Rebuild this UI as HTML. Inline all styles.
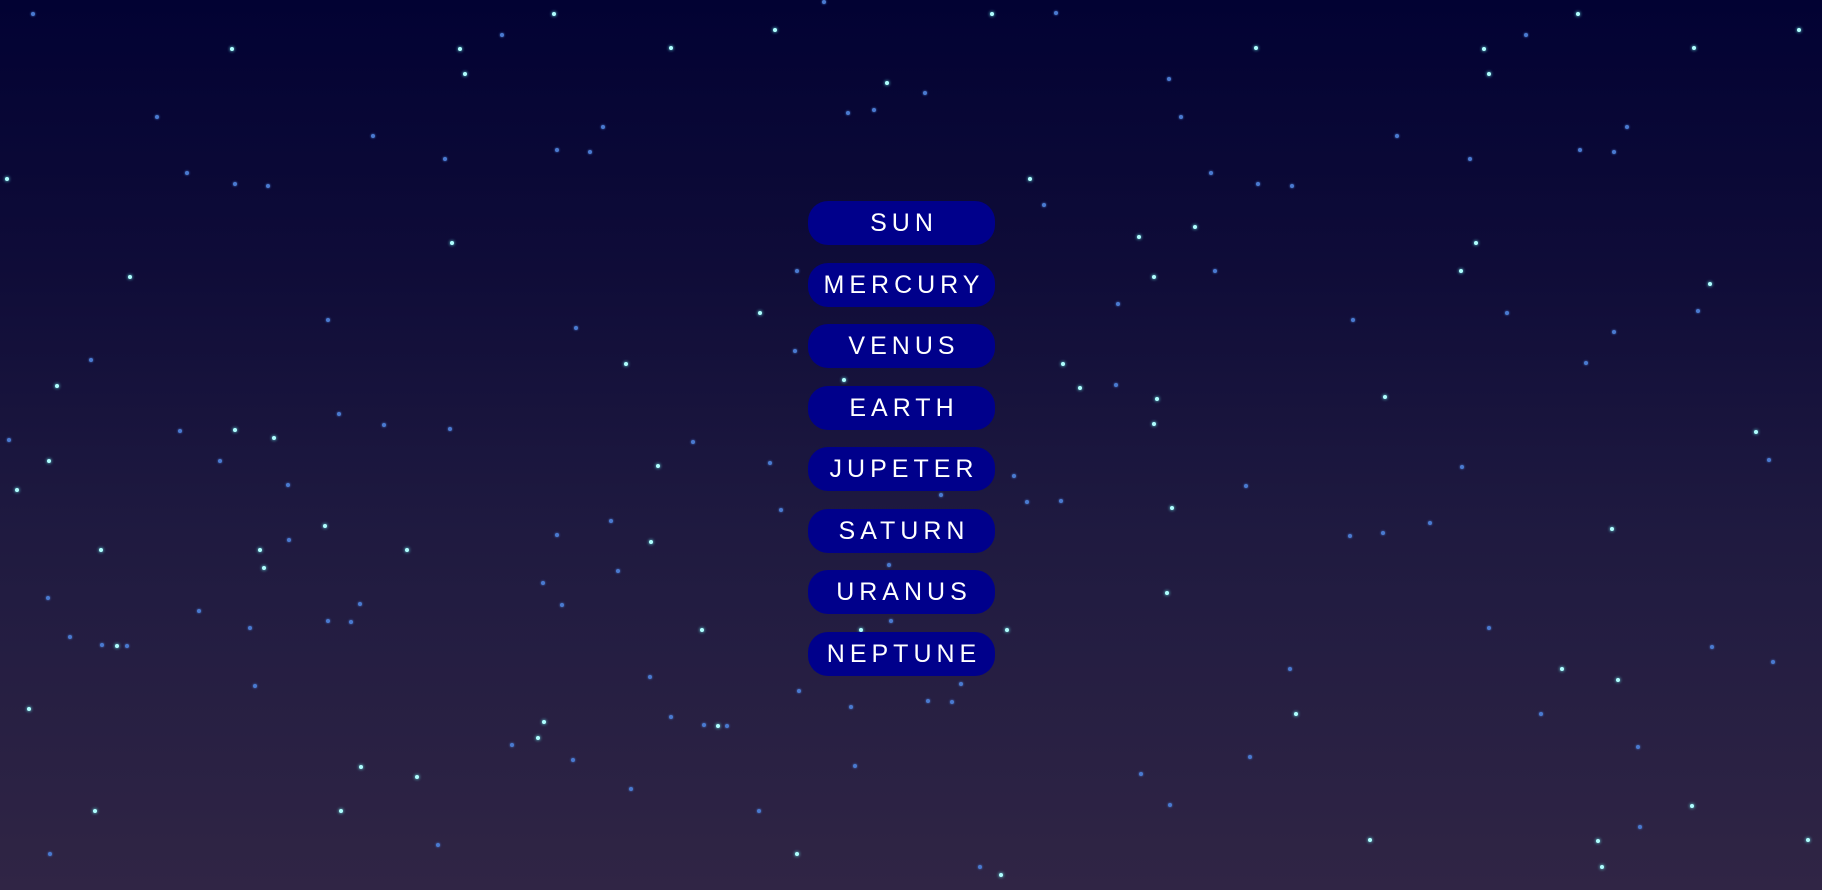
<!DOCTYPE html>
<html><head><meta charset="utf-8"><style>
html,body{margin:0;padding:0}
body{width:1822px;height:890px;overflow:hidden;position:relative;background:linear-gradient(to bottom,#020233 0%,#0f0c38 30%,#1f1a40 60%,#302545 100%);font-family:"Liberation Sans",sans-serif}
.s{position:absolute;width:4px;height:4px;border-radius:50%;background:#4a7ad0;box-shadow:0 0 2px #4a7ad0}
.b{background:#b0ffff;box-shadow:0 0 3px #7ff}
.btn{position:absolute;left:808px;width:187px;height:44px;border-radius:20px;background:#00008b;color:#fff;font-size:25px;letter-spacing:5px;text-align:center;line-height:44px;padding-left:5px;box-sizing:border-box}
</style></head><body>
<div id="st"></div>
<div class="btn" style="top:201px">SUN</div>
<div class="btn" style="top:263px">MERCURY</div>
<div class="btn" style="top:324px">VENUS</div>
<div class="btn" style="top:386px">EARTH</div>
<div class="btn" style="top:447px">JUPETER</div>
<div class="btn" style="top:509px">SATURN</div>
<div class="btn" style="top:570px">URANUS</div>
<div class="btn" style="top:632px">NEPTUNE</div>
<script>
var d=[[28,12,0],[200,42,1],[135,101,0],[161,149,0],[202,158,0],[231,160,0],[6,154,1],[396,42,1],[400,64,1],[432,30,0],[477,12,1],[577,41,1],[667,26,1],[709,2,0],[763,71,1],[796,80,0],[730,97,0],[752,95,0],[854,12,1],[909,11,0],[1081,41,1],[1006,68,0],[1016,101,0],[1277,42,1],[1281,64,1],[1313,30,0],[1358,12,1],[1458,41,1],[1548,26,1],[321,117,0],[383,137,0],[479,129,0],[508,131,0],[519,109,0],[886,154,1],[898,176,0],[980,204,1],[1028,195,1],[1042,149,0],[1083,158,0],[1112,160,0],[1202,117,0],[1265,137,0],[1360,129,0],[1389,131,0],[1400,109,0],[112,238,1],[389,209,1],[282,275,0],[496,282,0],[539,313,1],[654,269,1],[686,233,0],[684,302,0],[726,327,1],[915,313,1],[929,334,1],[962,262,0],[993,238,1],[1046,233,0],[1164,275,0],[1270,209,1],[1257,233,1],[1297,269,0],[1389,286,0],[1365,312,0],[1461,268,0],[1472,244,1],[49,332,1],[78,310,0],[8,379,0],[42,397,1],[15,422,1],[155,371,0],[202,370,1],[236,377,1],[189,397,0],[248,417,0],[292,356,0],[330,366,0],[387,369,0],[596,380,0],[566,401,1],[663,398,0],[672,439,0],[810,426,0],[873,410,0],[884,432,0],[913,431,0],[996,343,1],[993,365,1],[960,331,0],[1009,437,1],[1072,418,0],[1192,342,1],[1258,402,0],[1231,450,0],[1190,459,0],[1162,461,0],[1387,455,1],[1511,372,1],[1522,396,0],[87,473,1],[224,473,1],[227,489,1],[249,465,0],[280,453,1],[350,473,1],[479,460,0],[526,448,0],[560,466,1],[532,491,0],[467,502,0],[484,521,0],[41,515,0],[60,548,0],[88,555,0],[101,556,1],[109,556,0],[171,526,0],[215,540,0],[282,534,0],[302,535,0],[310,520,0],[604,542,1],[765,486,0],[767,534,0],[741,542,1],[867,542,1],[1004,510,1],[1281,540,0],[1473,557,0],[1526,570,0],[25,610,1],[219,590,0],[468,621,1],[463,635,1],[441,641,0],[493,654,0],[559,583,0],[577,617,0],[606,624,0],[618,625,1],[626,625,0],[688,595,0],[732,608,0],[799,603,0],[819,604,0],[827,589,0],[1110,576,0],[1115,614,1],[1344,576,1],[1392,585,1],[1326,614,0],[1410,643,0],[311,660,1],[359,669,1],[82,698,1],[293,698,1],[543,679,0],[653,698,0],[736,659,0],[982,666,0],[1007,693,0],[1076,651,0],[1179,723,1],[1375,724,1],[1411,712,0],[1456,694,1],[1556,723,1],[43,735,0],[377,727,0],[686,735,1],[843,746,0],[861,753,1],[1379,746,1]];
var k=1822/1568,h='';
d.forEach(function(p){h+='<div class="s'+(p[2]?' b':'')+'" style="left:'+(p[0]*k-2).toFixed(1)+'px;top:'+(p[1]*k-2).toFixed(1)+'px"></div>'});
document.getElementById('st').innerHTML=h;
</script>
</body></html>
